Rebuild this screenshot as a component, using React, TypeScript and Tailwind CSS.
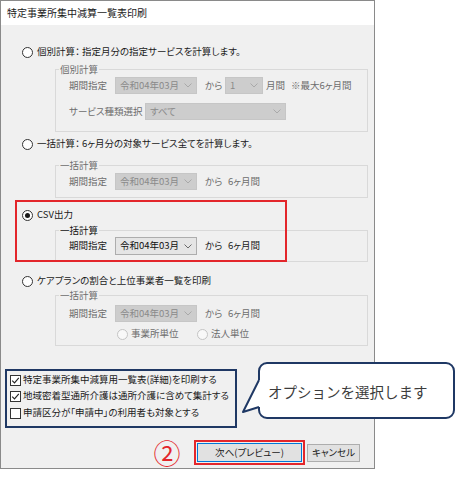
import React from "react";

function Radio({ checked = false, disabled = false }: { checked?: boolean; disabled?: boolean }) {
  return (
    <span
      className={
        disabled
          ? "w-[11px] h-[11px] rounded-full border border-[#c4c4c4] bg-[#f8f8f8] shrink-0"
          : "w-[11px] h-[11px] rounded-full border border-[#333333] bg-white shrink-0 flex items-center justify-center"
      }
    >
      {checked && <span className="w-[5px] h-[5px] rounded-full bg-[#1a1a1a]" />}
    </span>
  );
}

function Chevron({ color }: { color: string }) {
  return (
    <svg width="8" height="5" viewBox="0 0 8 5" className="shrink-0">
      <path d="M0.5 0.5 L4 4 L7.5 0.5" stroke={color} strokeWidth="1" fill="none" />
    </svg>
  );
}

function Select({ text, className = "", disabled = false }: { text: string; className?: string; disabled?: boolean }) {
  return (
    <div
      className={
        (disabled
          ? "h-[17px] flex items-center justify-between pl-[4px] pr-[4px] border border-[#c6c6c6] bg-[#cdcdcd] text-[#8a8a8a] "
          : "h-[18px] flex items-center justify-between pl-[4px] pr-[4px] border border-[#adadad] bg-[#e5e5e5] text-[#111111] ") + className
      }
    >
      <span>{text}</span>
      <Chevron color={disabled ? "#a9a9a9" : "#6a6a6a"} />
    </div>
  );
}

function Group({
  label,
  disabled = false,
  className = "",
  children,
}: {
  label: string;
  disabled?: boolean;
  className?: string;
  children: React.ReactNode;
}) {
  return (
    <fieldset className={"ml-[54px] w-[313px] border border-[#d9d9d9] pl-[13px] " + className}>
      <legend
        className={
          disabled
            ? "ml-[-10px] px-[1px] h-[12px] leading-[12px] text-[#6d6d6d]"
            : "ml-[-10px] px-[1px] h-[12px] leading-[12px] text-[#111111]"
        }
      >
        {label}
      </legend>
      {children}
    </fieldset>
  );
}

function Check({ checked }: { checked: boolean }) {
  return (
    <span className="w-[11px] h-[11px] border border-[#333333] bg-white shrink-0 flex items-center justify-center">
      {checked && (
        <svg width="9" height="9" viewBox="0 0 9 9">
          <path d="M1.2 4.6 L3.5 6.9 L7.8 1.8" stroke="#222222" strokeWidth="1.1" fill="none" />
        </svg>
      )}
    </span>
  );
}

export default function App() {
  return (
    <div className="w-[457px] h-[480px] bg-white relative font-['Noto_Sans_CJK_JP','Noto_Sans',sans-serif] text-[9.5px] leading-none text-[#1a1a1a] [font-feature-settings:'palt']">
      <div className="w-[375px] h-[469px] border border-[#8a8a8a] flex flex-col">
        <div className="h-[24px] bg-white flex items-center pl-[6px] text-[10px] text-[#1a1a1a] shrink-0">
          特定事業所集中減算一覧表印刷
        </div>
        <div className="flex-1 bg-[#f0f0f0] flex flex-col">
          {/* Section 1 */}
          <div className="mt-[19px] h-[16px] flex items-center ml-[21px] gap-[4px]">
            <Radio />
            <span>個別計算： 指定月分の指定サービスを計算します。</span>
          </div>
          <Group label="個別計算" disabled className="mt-[3px] pb-[11px]">
            <div className="mt-[2px] h-[17px] flex items-center text-[#6d6d6d]">
              <span className="w-[46px]">期間指定</span>
              <Select text="令和04年03月" disabled className="w-[82px]" />
              <span className="ml-[8px] w-[20px]">から</span>
              <Select text="1" disabled className="w-[38px]" />
              <span className="ml-[3px] w-[19px]">月間</span>
              <span className="ml-[6px]">※最大6ヶ月間</span>
            </div>
            <div className="mt-[9px] h-[17px] flex items-center text-[#6d6d6d]">
              <span className="w-[76px]">サービス種類選択</span>
              <Select text="すべて" disabled className="w-[141px]" />
            </div>
          </Group>

          {/* Section 2 */}
          <div className="mt-[4px] h-[16px] flex items-center ml-[21px] gap-[4px]">
            <Radio />
            <span>一括計算： 6ヶ月分の対象サービス全てを計算します。</span>
          </div>
          <Group label="一括計算" disabled className="mt-[7px] pb-[7px]">
            <div className="mt-[2px] h-[17px] flex items-center text-[#6d6d6d]">
              <span className="w-[46px]">期間指定</span>
              <Select text="令和04年03月" disabled className="w-[82px]" />
              <span className="ml-[8px] w-[23px]">から</span>
              <span>6ヶ月間</span>
            </div>
          </Group>

          {/* Section 3 CSV */}
          <div className="mt-[9px] h-[16px] flex items-center ml-[21px] gap-[4px]">
            <Radio checked />
            <span>CSV出力</span>
          </div>
          <Group label="一括計算" className="mt-[1px] pb-[6px]">
            <div className="mt-[1px] h-[18px] flex items-center">
              <span className="w-[46px]">期間指定</span>
              <Select text="令和04年03月" className="w-[82px]" />
              <span className="ml-[8px] w-[23px]">から</span>
              <span>6ヶ月間</span>
            </div>
          </Group>

          {/* Section 4 */}
          <div className="mt-[11px] h-[16px] flex items-center ml-[21px] gap-[4px]">
            <Radio />
            <span>ケアプランの割合と上位事業者一覧を印刷</span>
          </div>
          <Group label="一括計算" disabled className="mt-0 pb-[4px]">
            <div className="mt-[4px] h-[17px] flex items-center text-[#6d6d6d]">
              <span className="w-[46px]">期間指定</span>
              <Select text="令和04年03月" disabled className="w-[82px]" />
              <span className="ml-[8px] w-[23px]">から</span>
              <span>6ヶ月間</span>
            </div>
            <div className="mt-[5px] h-[14px] flex items-center text-[#6d6d6d] ml-[48px]">
              <div className="w-[80px] flex items-center gap-[3px]">
                <Radio disabled />
                <span>事業所単位</span>
              </div>
              <div className="flex items-center gap-[3px]">
                <Radio disabled />
                <span>法人単位</span>
              </div>
            </div>
          </Group>

          {/* Options */}
          <div className="mt-[23px] ml-[4px] w-[232px] h-[59px] border-2 border-[#1f3864] flex flex-col pt-[1px] pl-[3px]">
            <div className="h-[16px] flex items-center gap-[2px]">
              <Check checked />
              <span>特定事業所集中減算用一覧表(詳細)を印刷する</span>
            </div>
            <div className="h-[16px] flex items-center gap-[2px]">
              <Check checked />
              <span>地域密着型通所介護は通所介護に含めて集計する</span>
            </div>
            <div className="mt-[1px] h-[16px] flex items-center gap-[2px]">
              <Check checked={false} />
              <span>申請区分が「申請中」の利用者も対象とする</span>
            </div>
          </div>

          {/* Buttons */}
          <div className="mt-[12px] h-[25px] flex items-center">
            <span className="ml-[153px] w-[26px] h-[25px] flex items-center justify-center text-[27px] leading-none text-[#e3262b] [font-feature-settings:normal]">
              ②
            </span>
            <div className="ml-[14px] border-2 border-[#e3262b] p-[1px]">
              <div className="w-[105px] h-[19px] border border-[#0078d7] bg-[#e1e1e1] flex items-center justify-center">
                次へ(プレビュー)
              </div>
            </div>
            <div className="ml-[2px] w-[53px] h-[18px] border border-[#adadad] bg-[#e1e1e1] flex items-center justify-center">
              キャンセル
            </div>
          </div>
        </div>
      </div>

      {/* Annotation: red box around CSV */}
      <div className="absolute left-[15px] top-[200px] w-[272px] h-[62px] border-2 border-[#e3262b]" />

      {/* Callout */}
      <div className="absolute left-[258px] top-[362px] w-[197px] h-[57px] rounded-[9px] border-2 border-[#1f3864] bg-white flex items-center pl-[8px] pt-[4px] text-[14.5px] text-[#3c3c3c] [font-feature-settings:normal]">
        オプションを選択します
      </div>
      <svg className="absolute left-[240px] top-[375px]" width="24" height="42" viewBox="0 0 24 42">
        <polygon points="21,5 18,5 3,37 18,32 21,32" fill="#ffffff" />
        <polyline points="19,5 3,37 19,32" fill="none" stroke="#1f3864" strokeWidth="2" strokeLinejoin="round" />
      </svg>
    </div>
  );
}
